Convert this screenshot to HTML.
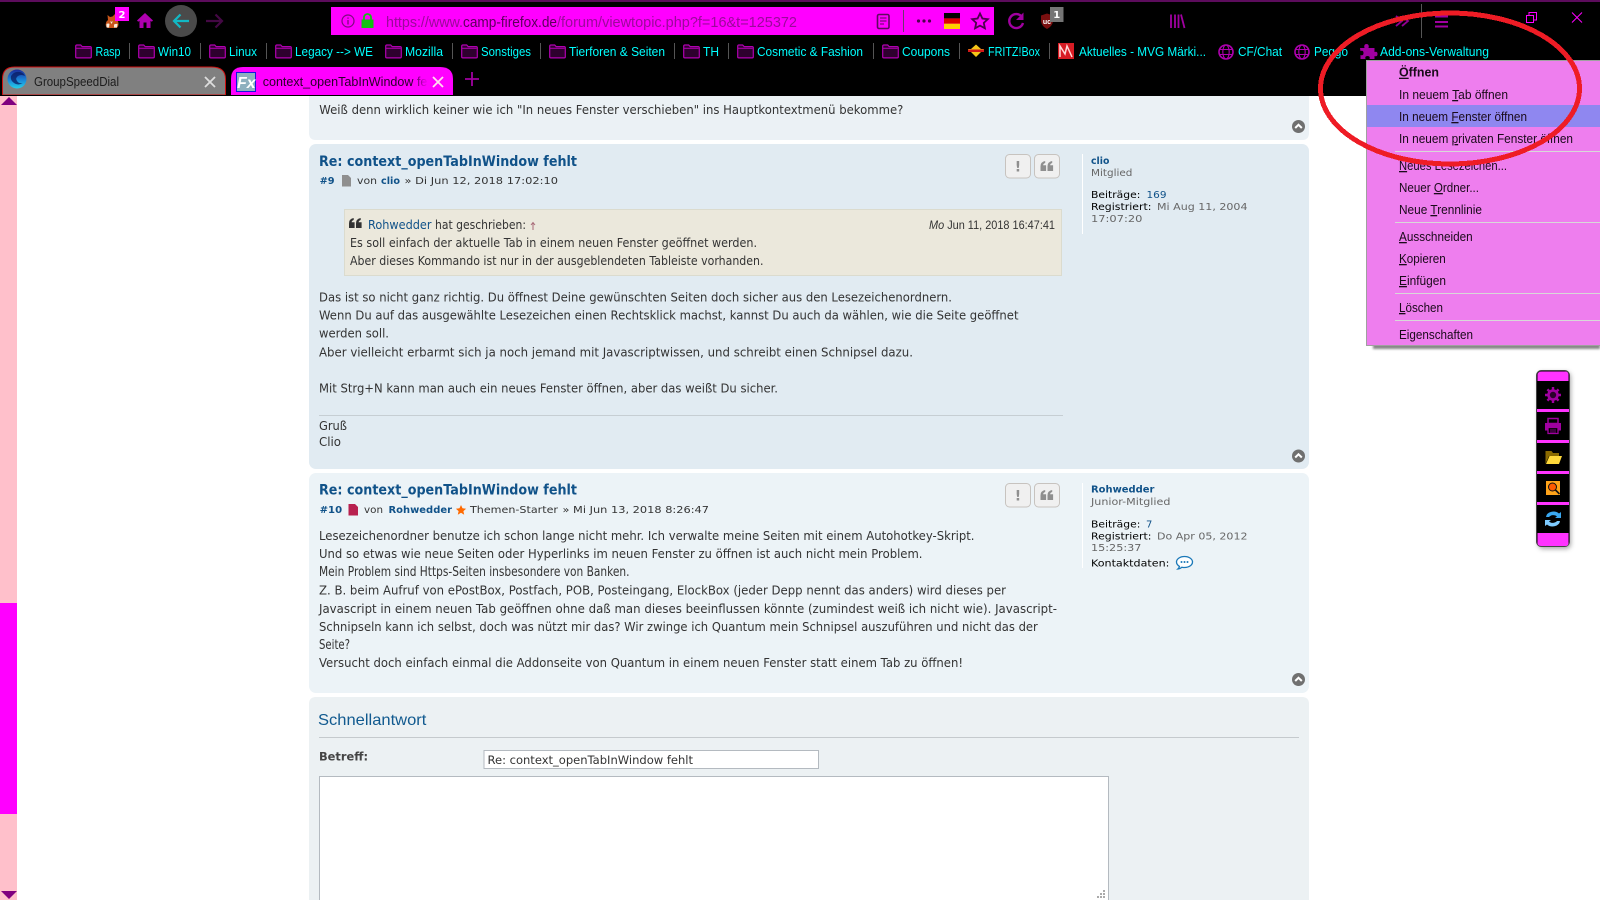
<!DOCTYPE html>
<html lang="de"><head><meta charset="utf-8"><title>context_openTabInWindow fehlt</title>
<style>
html,body{margin:0;padding:0;background:#fff;width:1600px;height:900px;overflow:hidden}
svg{display:block}
text{white-space:pre}
.bm{font:13px "Liberation Sans",sans-serif;fill:#00ffff}
.mi{font:13px "Liberation Sans",sans-serif;fill:#1a0a1a}
.b{font:12px "DejaVu Sans",sans-serif;fill:#333}
.m{font:10px "DejaVu Sans",sans-serif;fill:#333}
.mb{font:bold 10px "DejaVu Sans",sans-serif;fill:#105289}
.t{font:bold 14.5px "DejaVu Sans",sans-serif;fill:#105289}
.g{fill:#666}
.u{text-decoration:underline}
</style></head><body>
<svg xmlns="http://www.w3.org/2000/svg" width="1600" height="900" viewBox="0 0 1600 900">
<defs>
<g id="fo"><path d="M.7 2.2q0-1.2 1.2-1.2h3.8l1.500 1.600h7.900q1.200 0 1.200 1.200v9.100q0 1-1.200 1H1.900q-1.200 0-1.200-1z" fill="#2e002e" stroke="#b000b0" stroke-width="1.200"/><path d="M1 4.300h14.600" stroke="#b000b0" stroke-width="1"/></g>
<g id="gl"><circle cx="8" cy="8" r="7" fill="none" stroke="#b000b0" stroke-width="1.600"/><ellipse cx="8" cy="8" rx="3.200" ry="7" fill="none" stroke="#b000b0" stroke-width="1.100"/><path d="M1 5.500h14M1 10.500h14" stroke="#b000b0" stroke-width="1.100"/></g>
<g id="ub"><circle cx="6.500" cy="6.500" r="6.500" fill="#707070"/><path d="M3.200 8 6.500 4.800 9.800 8" fill="none" stroke="#fff" stroke-width="2"/></g>
<g id="bt"><rect x=".5" y=".5" width="25" height="23.500" rx="4" fill="#f0f0f0" stroke="#c7c3bf"/></g>
<g id="q"><path d="M0 5.500Q0 .8 4.700 0v2Q2.800 2.500 2.600 4.300H5.600V10H0zM7 5.500Q7 .8 11.700 0v2Q9.800 2.500 9.600 4.300h3V10H7z"/></g>
<linearGradient id="fade" x1="0" x2="1" y1="0" y2="0"><stop offset="0" stop-color="#f0f" stop-opacity="0"/><stop offset="1" stop-color="#f0f"/></linearGradient>
<linearGradient id="gsd" x1="0" x2="0" y1="0" y2="1"><stop offset="0" stop-color="#1c2a9a"/><stop offset=".55" stop-color="#1a86d8"/><stop offset="1" stop-color="#25d0e8"/></linearGradient>
<filter id="sh" x="-30%" y="-10%" width="160%" height="120%"><feGaussianBlur stdDeviation="2.500"/></filter>
<filter id="sh2" x="-5%" y="-5%" width="110%" height="110%"><feGaussianBlur stdDeviation="1"/></filter>
</defs>

<!-- chrome -->
<rect width="1600" height="96" fill="#000"/>
<rect width="1600" height="2" fill="#5c0c5c"/>

<!-- nav -->
<g>
<path d="M107.500 15l2.500 2 2.500-.5 2.500-2.500 1 5q2.500 2 2.500 5 0 3-2 4h-9q-2.500-2-1.500-5 .5-2 2-3z" fill="#c8551a"/>
<path d="M106.500 24q2-1 3 0l-.5 3.500h-2.500zM114 24.500q2-1 3.500-.5l-.5 3.500h-3zM110 21q1.500 1.500 3 0l-1.500 3z" fill="#f7ecdc"/>
<rect x="115" y="7" width="14" height="14" fill="#f0f"/><text x="122" y="18" text-anchor="middle" font-family="DejaVu Sans" font-weight="bold" font-size="10" fill="#fff">2</text>
<path d="M145 13 137 20.500l1.200 1.300 1.300-1.100V28h11v-7.300l1.300 1.100 1.200-1.300z" fill="#b000b0"/><rect x="143.500" y="22.500" width="3" height="5.500" fill="#000"/>
<circle cx="181" cy="21" r="16" fill="#4a4a4a"/>
<path d="M189 21H174M180.500 14.500 174 21l6.500 6.500" fill="none" stroke="#12b8c4" stroke-width="2.200"/>
<path d="M206 21h15M215.500 14.500 222 21l-6.500 6.500" fill="none" stroke="#440844" stroke-width="2.200"/>
</g>

<!-- URL bar -->
<rect x="331" y="7" width="663" height="28" fill="#f0f"/>
<circle cx="348" cy="21" r="6" fill="none" stroke="#7d0a7d" stroke-width="1.200"/><path d="M348 20v4.500M348 17.500v1.200" stroke="#7d0a7d" stroke-width="1.300"/>
<path d="M364 20v-2.500a3.500 3.500 0 0 1 7 0V20" fill="none" stroke="#13c013" stroke-width="1.800"/><rect x="361.500" y="19.500" width="12" height="8.500" fill="#13c013"/>
<text x="386" y="27" font-family="Liberation Sans" font-size="15" fill="#9a0a9a" textLength="77" lengthAdjust="spacingAndGlyphs">https://www.</text>
<text x="463" y="27" font-family="Liberation Sans" font-size="15" fill="#5a005a" textLength="94" lengthAdjust="spacingAndGlyphs">camp-firefox.de</text>
<text x="557" y="27" font-family="Liberation Sans" font-size="15" fill="#9a0a9a" textLength="240" lengthAdjust="spacingAndGlyphs">/forum/viewtopic.php?f=16&amp;t=125372</text>
<rect x="877.500" y="14.500" width="11.500" height="14" rx="1.500" fill="none" stroke="#5e0a5e" stroke-width="1.600"/><path d="M880 18h6.500M880 21h6.500M880 24h4" stroke="#5e0a5e" stroke-width="1"/>
<rect x="903" y="10" width="1" height="22" fill="#6a3a6a"/>
<circle cx="918.500" cy="21" r="1.600" fill="#4e004e"/><circle cx="924" cy="21" r="1.600" fill="#4e004e"/><circle cx="929.500" cy="21" r="1.600" fill="#4e004e"/>
<rect x="944" y="13" width="16" height="5.400" fill="#000"/><rect x="944" y="18.400" width="16" height="5.300" fill="#d00"/><rect x="944" y="23.700" width="16" height="5.300" fill="#ffce00"/>
<path d="M980 13.500l2.400 5 5.400.700-4 3.700 1.100 5.400-4.900-2.700-4.900 2.700 1.100-5.400-4-3.700 5.400-.700z" fill="none" stroke="#4e004e" stroke-width="1.800"/>

<!-- toolbar right -->
<path d="M1022 17a7 7 0 1 0 1 6" fill="none" stroke="#a000a0" stroke-width="2.400"/><path d="M1023.500 12.500v7.500h-7.500z" fill="#a000a0"/>
<path d="M1041 15.500l6-2 6 2v6q-1 5-6 7.500-5-2.500-6-7.500z" fill="#7a1010"/>
<text x="1047" y="24" text-anchor="middle" font-family="Liberation Sans" font-weight="bold" font-size="7" fill="#fff">uc</text>
<rect x="1050" y="7" width="13.500" height="15" fill="#757575"/><text x="1056.700" y="18" text-anchor="middle" font-family="DejaVu Sans" font-weight="bold" font-size="10" fill="#fff">1</text>
<path d="M1171 14.500v13.500M1175 14.500v13.500M1178.500 14.500v13.500M1181 14.500l3.500 13.500" stroke="#a000a0" stroke-width="1.800" fill="none"/>
<path d="M1396 16l6 5-6 5M1402 16l6 5-6 5" fill="none" stroke="#900090" stroke-width="1.800"/>
<rect x="1421" y="4" width="1" height="34" fill="#555"/>
<path d="M1435 16.500h13M1435 22h13M1435 26.500h13" stroke="#a000a0" stroke-width="2"/>
<rect x="1526.500" y="15.500" width="7" height="7" fill="none" stroke="#f0f" stroke-width="1"/><path d="M1529 15v-2.500h7.500V20H1534" fill="none" stroke="#f0f" stroke-width="1"/>
<path d="M1572 12.500l10 10M1582 12.500l-10 10" stroke="#f0f" stroke-width="1"/>

<!-- bookmarks -->
<use href="#fo" x="75" y="44"/><text class="bm" x="95.500" y="56" textLength="25" lengthAdjust="spacingAndGlyphs">Rasp</text><rect x="129" y="43" width="1" height="16" fill="#555"/>
<use href="#fo" x="138" y="44"/><text class="bm" x="158" y="56" textLength="33" lengthAdjust="spacingAndGlyphs">Win10</text><rect x="200" y="43" width="1" height="16" fill="#555"/>
<use href="#fo" x="209" y="44"/><text class="bm" x="229" y="56" textLength="28" lengthAdjust="spacingAndGlyphs">Linux</text><rect x="266" y="43" width="1" height="16" fill="#555"/>
<use href="#fo" x="275" y="44"/><text class="bm" x="295" y="56" textLength="78" lengthAdjust="spacingAndGlyphs">Legacy --&gt; WE</text>
<use href="#fo" x="385" y="44"/><text class="bm" x="405" y="56" textLength="38" lengthAdjust="spacingAndGlyphs">Mozilla</text><rect x="452" y="43" width="1" height="16" fill="#555"/>
<use href="#fo" x="461" y="44"/><text class="bm" x="481" y="56" textLength="50" lengthAdjust="spacingAndGlyphs">Sonstiges</text><rect x="540" y="43" width="1" height="16" fill="#555"/>
<use href="#fo" x="549" y="44"/><text class="bm" x="569" y="56" textLength="96" lengthAdjust="spacingAndGlyphs">Tierforen &amp; Seiten</text><rect x="674" y="43" width="1" height="16" fill="#555"/>
<use href="#fo" x="683" y="44"/><text class="bm" x="703" y="56" textLength="16" lengthAdjust="spacingAndGlyphs">TH</text><rect x="728" y="43" width="1" height="16" fill="#555"/>
<use href="#fo" x="737" y="44"/><text class="bm" x="757" y="56" textLength="106" lengthAdjust="spacingAndGlyphs">Cosmetic &amp; Fashion</text><rect x="873" y="43" width="1" height="16" fill="#555"/>
<use href="#fo" x="882" y="44"/><text class="bm" x="902" y="56" textLength="48" lengthAdjust="spacingAndGlyphs">Coupons</text><rect x="959" y="43" width="1" height="16" fill="#555"/>
<path d="M976 44.500l5 4.500h3l-3 3-5 5-5-5-3-3h3z" fill="#f5c518"/><path d="M968 49.500h16v2.500h-16z" fill="#d01818"/>
<text class="bm" x="988" y="56" textLength="52" lengthAdjust="spacingAndGlyphs">FRITZ!Box</text><rect x="1049" y="43" width="1" height="16" fill="#555"/>
<rect x="1058" y="43" width="16" height="16" fill="#d81c24"/><path d="M1060 57V46l5 8 2-8 5 11" fill="none" stroke="#ffd8d8" stroke-width="1.500"/>
<text class="bm" x="1079" y="56" textLength="127" lengthAdjust="spacingAndGlyphs">Aktuelles - MVG Märki...</text>
<use href="#gl" x="1218" y="44"/><text class="bm" x="1238" y="56" textLength="44" lengthAdjust="spacingAndGlyphs">CF/Chat</text>
<use href="#gl" x="1294" y="44"/><text class="bm" x="1314" y="56" textLength="34" lengthAdjust="spacingAndGlyphs">Peggo</text>
<path d="M1360 48h4.500q-1-4 2-4t2 4h6v4q3-1 3 2t-3 2v3h-5q1-3-2-3t-2 3h-5v-4q3 1 3-2t-3-2z" fill="#a000a0"/>
<text class="bm" x="1380" y="56" textLength="109" lengthAdjust="spacingAndGlyphs">Add-ons-Verwaltung</text>

<!-- tabs -->
<path d="M2.500 95V79q0-12 12-12h197q14 0 14 12v16z" fill="#808080" stroke="#d01010" stroke-width="1"/>
<circle cx="17" cy="79" r="9.500" fill="url(#gsd)"/><path d="M11 76q3-5 9-4 4 1 5 4-4-2-7 0-3 2-1 5 2 3 6 2-5 3-9 0-4-3-3-7z" fill="#0a1a60" opacity=".75"/>
<text x="34" y="86" font-family="Liberation Sans" font-size="13" fill="#1c1c1c" textLength="85" lengthAdjust="spacingAndGlyphs">GroupSpeedDial</text>
<path d="M205 77l10 10M215 77l-10 10" stroke="#ddd" stroke-width="1.800"/>
<path d="M231 95V79q0-12 12-12h197q13 0 13 12v16z" fill="#f0f"/>
<rect x="236.500" y="72.500" width="19" height="19" fill="#8db0be" stroke="#1414e0" stroke-width="1"/>
<text x="237" y="88" font-family="Liberation Sans" font-style="italic" font-weight="bold" font-size="16" fill="#fff">Fx</text>
<text x="262.700" y="86" font-family="Liberation Sans" font-size="13" fill="#2a002a" textLength="178" lengthAdjust="spacingAndGlyphs">context_openTabInWindow fehlt</text>
<rect x="412" y="70" width="16" height="24" fill="url(#fade)"/><rect x="428" y="70" width="18" height="24" fill="#f0f"/>
<path d="M433 77l10 10M443 77l-10 10" stroke="#fde" stroke-width="1.800"/>
<path d="M465 79h14M472 72v14" stroke="#a000a0" stroke-width="1.800"/>
<rect x="0" y="95" width="1600" height="1" fill="#000"/>

<!-- scrollbar -->
<rect x="0" y="96" width="17" height="804" fill="#ffc0cb"/>
<rect x="0" y="603" width="17" height="211" fill="#f0f"/>
<path d="M9 97l8 8H1z" fill="#800080"/><path d="M1 891h16l-8 8z" fill="#800080"/>

<!-- post 8 remainder -->
<path d="M309 96h1000v37q0 7-7 7H316q-7 0-7-7z" fill="#ebf1f5"/>
<text class="b" x="319.300" y="114" textLength="584" lengthAdjust="spacingAndGlyphs">Weiß denn wirklich keiner wie ich "In neues Fenster verschieben" ins Hauptkontextmenü bekomme?</text>
<use href="#ub" x="1292" y="120"/>

<!-- post 9 -->
<rect x="309" y="144" width="1000" height="325" rx="7" fill="#e1ebf2"/>
<text class="t" x="319" y="166" textLength="258" lengthAdjust="spacingAndGlyphs">Re: context_openTabInWindow fehlt</text>
<text class="mb" x="319.600" y="184" textLength="15" lengthAdjust="spacingAndGlyphs">#9</text>
<path d="M342 175h6l3 3v8.500h-9z" fill="#8f8f8f"/>
<text class="m" x="357" y="184" textLength="20" lengthAdjust="spacingAndGlyphs">von</text>
<text class="mb" x="381" y="184" textLength="19" lengthAdjust="spacingAndGlyphs">clio</text>
<text class="m" x="404.500" y="184" textLength="153.500" lengthAdjust="spacingAndGlyphs">» Di Jun 12, 2018 17:02:10</text>
<use href="#bt" x="1005" y="154"/><use href="#bt" x="1034" y="154"/>
<text x="1018" y="171.500" text-anchor="middle" font-family="DejaVu Sans" font-weight="bold" font-size="14" fill="#8f8f8f">!</text>
<use href="#q" x="1040.500" y="161" fill="#8f8f8f"/>
<rect x="344.500" y="209.500" width="717" height="66" fill="#ebe8dc" stroke="#dbdbce"/>
<use href="#q" x="349" y="218" fill="#333"/>
<text class="b" x="368" y="229" textLength="63.500" lengthAdjust="spacingAndGlyphs" style="fill:#105289">Rohwedder</text>
<text class="b" x="435" y="229" textLength="91" lengthAdjust="spacingAndGlyphs">hat geschrieben:</text>
<path d="M533 230v-7M531 225l2-2.500 2 2.500" stroke="#a86a78" fill="none"/>
<text x="929" y="229" font-family="Liberation Sans" font-size="11.500" fill="#333" textLength="126" lengthAdjust="spacingAndGlyphs"><tspan font-style="italic">Mo</tspan> Jun 11, 2018 16:47:41</text>
<text class="b" x="350" y="247" textLength="407" lengthAdjust="spacingAndGlyphs">Es soll einfach der aktuelle Tab in einem neuen Fenster geöffnet werden.</text>
<text class="b" x="350" y="265" textLength="413.500" lengthAdjust="spacingAndGlyphs">Aber dieses Kommando ist nur in der ausgeblendeten Tableiste vorhanden.</text>
<text class="b" x="319" y="301.500" textLength="633" lengthAdjust="spacingAndGlyphs">Das ist so nicht ganz richtig. Du öffnest Deine gewünschten Seiten doch sicher aus den Lesezeichenordnern.</text>
<text class="b" x="319" y="319.500" textLength="699.500" lengthAdjust="spacingAndGlyphs">Wenn Du auf das ausgewählte Lesezeichen einen Rechtsklick machst, kannst Du auch da wählen, wie die Seite geöffnet</text>
<text class="b" x="319" y="337.500" textLength="70" lengthAdjust="spacingAndGlyphs">werden soll.</text>
<text class="b" x="319" y="356.500" textLength="594" lengthAdjust="spacingAndGlyphs">Aber vielleicht erbarmt sich ja noch jemand mit Javascriptwissen, und schreibt einen Schnipsel dazu.</text>
<text class="b" x="319" y="392.500" textLength="459" lengthAdjust="spacingAndGlyphs">Mit Strg+N kann man auch ein neues Fenster öffnen, aber das weißt Du sicher.</text>
<rect x="319" y="415" width="744" height="1" fill="#c6ced3"/>
<text class="b" x="319" y="430" textLength="28" lengthAdjust="spacingAndGlyphs">Gruß</text>
<text class="b" x="319" y="446" textLength="22" lengthAdjust="spacingAndGlyphs">Clio</text>
<use href="#ub" x="1292" y="449.500"/>
<rect x="1082" y="154" width="1" height="80" fill="#fff"/>
<text class="mb" x="1091" y="164" textLength="18.400" lengthAdjust="spacingAndGlyphs">clio</text>
<text class="m g" x="1091" y="176" textLength="41.400" lengthAdjust="spacingAndGlyphs">Mitglied</text>
<text class="m" style="fill:#000" x="1091" y="198" textLength="49.400" lengthAdjust="spacingAndGlyphs">Beiträge:</text>
<text class="m" style="fill:#105289" x="1146.500" y="198" textLength="20" lengthAdjust="spacingAndGlyphs">169</text>
<text class="m" style="fill:#000" x="1091" y="210" textLength="60.400" lengthAdjust="spacingAndGlyphs">Registriert:</text>
<text class="m g" x="1157" y="210" textLength="90.500" lengthAdjust="spacingAndGlyphs">Mi Aug 11, 2004</text>
<text class="m g" x="1091" y="222" textLength="51.400" lengthAdjust="spacingAndGlyphs">17:07:20</text>

<!-- post 10 -->
<rect x="309" y="473" width="1000" height="220" rx="7" fill="#ecf3f7"/>
<text class="t" x="319" y="494.500" textLength="258" lengthAdjust="spacingAndGlyphs">Re: context_openTabInWindow fehlt</text>
<text class="mb" x="319.600" y="513" textLength="22.500" lengthAdjust="spacingAndGlyphs">#10</text>
<path d="M348.500 504h6.500l3 3v8.500h-9.500z" fill="#b8214f"/>
<text class="m" x="364" y="513" textLength="19" lengthAdjust="spacingAndGlyphs">von</text>
<text class="mb" x="388.500" y="513" textLength="63.500" lengthAdjust="spacingAndGlyphs">Rohwedder</text>
<path d="M461 505l1.500 3.300 3.600.4-2.700 2.400.8 3.600-3.200-1.900-3.200 1.900.8-3.600-2.700-2.400 3.600-.4z" fill="#ff6a00"/>
<text class="m" x="470" y="513" textLength="88" lengthAdjust="spacingAndGlyphs">Themen-Starter</text>
<text class="m" x="562.500" y="513" textLength="146.500" lengthAdjust="spacingAndGlyphs">» Mi Jun 13, 2018 8:26:47</text>
<use href="#bt" x="1005" y="483"/><use href="#bt" x="1034" y="483"/>
<text x="1018" y="500.500" text-anchor="middle" font-family="DejaVu Sans" font-weight="bold" font-size="14" fill="#8f8f8f">!</text>
<use href="#q" x="1040.500" y="490" fill="#8f8f8f"/>
<text class="b" x="319" y="540" textLength="655.500" lengthAdjust="spacingAndGlyphs">Lesezeichenordner benutze ich schon lange nicht mehr. Ich verwalte meine Seiten mit einem Autohotkey-Skript.</text>
<text class="b" x="319" y="558" textLength="603.500" lengthAdjust="spacingAndGlyphs">Und so etwas wie neue Seiten oder Hyperlinks im neuen Fenster zu öffnen ist auch nicht mein Problem.</text>
<text class="b" style="font-size:13px" x="319" y="576" textLength="310.500" lengthAdjust="spacingAndGlyphs">Mein Problem sind Https-Seiten insbesondere von Banken.</text>
<text class="b" x="319" y="594.500" textLength="687" lengthAdjust="spacingAndGlyphs">Z. B. beim Aufruf von ePostBox, Postfach, POB, Posteingang, ElockBox (jeder Depp nennt das anders) wird dieses per</text>
<text class="b" x="319" y="613" textLength="738" lengthAdjust="spacingAndGlyphs">Javascript in einem neuen Tab geöffnen ohne daß man dieses beeinflussen könnte (zumindest weiß ich nicht wie). Javascript-</text>
<text class="b" x="319" y="631" textLength="718.800" lengthAdjust="spacingAndGlyphs">Schnipseln kann ich selbst, doch was nützt mir das? Wir zwinge ich Quantum mein Schnipsel auszuführen und nicht das der</text>
<text class="b" style="font-size:13px" x="319" y="649" textLength="31" lengthAdjust="spacingAndGlyphs">Seite?</text>
<text class="b" x="319" y="667" textLength="644" lengthAdjust="spacingAndGlyphs">Versucht doch einfach einmal die Addonseite von Quantum in einem neuen Fenster statt einem Tab zu öffnen!</text>
<use href="#ub" x="1292" y="673"/>
<rect x="1082" y="483" width="1" height="85" fill="#fff"/>
<text class="mb" x="1091" y="492.700" textLength="63.400" lengthAdjust="spacingAndGlyphs">Rohwedder</text>
<text class="m g" x="1091" y="505" textLength="79.400" lengthAdjust="spacingAndGlyphs">Junior-Mitglied</text>
<text class="m" style="fill:#000" x="1091" y="527.400" textLength="49.400" lengthAdjust="spacingAndGlyphs">Beiträge:</text>
<text class="m" style="fill:#105289" x="1146" y="527.400">7</text>
<text class="m" style="fill:#000" x="1091" y="539.400" textLength="60.400" lengthAdjust="spacingAndGlyphs">Registriert:</text>
<text class="m g" x="1157" y="539.400" textLength="90.500" lengthAdjust="spacingAndGlyphs">Do Apr 05, 2012</text>
<text class="m g" x="1091" y="551" textLength="50.400" lengthAdjust="spacingAndGlyphs">15:25:37</text>
<text class="m" style="fill:#000" x="1091" y="566.700" textLength="78.400" lengthAdjust="spacingAndGlyphs">Kontaktdaten:</text>
<g transform="translate(0 -1)">
<path d="M1184.500 557.500c-4.500 0-8 2.500-8 5.500 0 1.800 1.300 3.400 3 4.400-.2 1-.8 1.900-1.600 2.600 1.600-.1 3-.8 4-1.800.8.200 1.700.3 2.600.3 4.500 0 8-2.500 8-5.500s-3.500-5.500-8-5.500z" fill="#fff" stroke="#1a78b8" stroke-width="1.300"/>
<circle cx="1181.500" cy="563" r="1" fill="#1a78b8"/><circle cx="1184.500" cy="563" r="1" fill="#1a78b8"/><circle cx="1187.500" cy="563" r="1" fill="#1a78b8"/>
</g>

<!-- quick reply -->
<path d="M316 697h986q7 0 7 7v196H309V704q0-7 7-7z" fill="#ecf1f3"/>
<text x="318" y="725" font-family="Liberation Sans" font-size="16" fill="#115a8f" textLength="108.400" lengthAdjust="spacingAndGlyphs">Schnellantwort</text>
<rect x="319" y="737" width="980" height="1" fill="#c5cacd"/>
<text x="319" y="760.700" font-family="DejaVu Sans" font-weight="bold" font-size="11.500" fill="#444" textLength="49" lengthAdjust="spacingAndGlyphs">Betreff:</text>
<rect x="484" y="750.500" width="334.500" height="18" fill="#fff" stroke="#b4bac0"/>
<text x="487.500" y="764" font-family="DejaVu Sans" font-size="11.500" fill="#333" textLength="205.500" lengthAdjust="spacingAndGlyphs">Re: context_openTabInWindow fehlt</text>
<path d="M319.500 900V776.500h789V900" fill="#fff" stroke="#b4bac0"/>
<path d="M1103 890h2v2h-2zM1100 893h2v2h-2zM1103 893h2v2h-2zM1097 896h2v2h-2zM1100 896h2v2h-2zM1103 896h2v2h-2z" fill="#aaa"/>

<!-- context menu -->
<rect x="1373" y="66" width="227" height="283" fill="#555" opacity=".7" filter="url(#sh2)"/>
<rect x="1366.500" y="60.500" width="234" height="285" fill="#ee7eee" stroke="#a0a0a0"/>
<rect x="1367" y="105" width="233" height="22" fill="#8f87f0"/>
<text x="1399" y="76.700" font-family="Liberation Sans" font-weight="bold" font-size="13" fill="#1a0a1a" textLength="40" lengthAdjust="spacingAndGlyphs"><tspan class="u">Ö</tspan>ffnen</text>
<text class="mi" x="1399" y="99" textLength="109" lengthAdjust="spacingAndGlyphs">In neuem <tspan class="u">T</tspan>ab öffnen</text>
<text class="mi" x="1399" y="121" textLength="128" lengthAdjust="spacingAndGlyphs">In neuem <tspan class="u">F</tspan>enster öffnen</text>
<text class="mi" x="1399" y="143" textLength="174" lengthAdjust="spacingAndGlyphs">In neuem <tspan class="u">p</tspan>rivaten Fenster öffnen</text>
<rect x="1395" y="151" width="205" height="1" fill="#d8d8d8"/>
<text class="mi" x="1399" y="170" textLength="108" lengthAdjust="spacingAndGlyphs"><tspan class="u">N</tspan>eues Lesezeichen...</text>
<text class="mi" x="1399" y="192" textLength="80" lengthAdjust="spacingAndGlyphs">Neuer <tspan class="u">O</tspan>rdner...</text>
<text class="mi" x="1399" y="214" textLength="83" lengthAdjust="spacingAndGlyphs">Neue <tspan class="u">T</tspan>rennlinie</text>
<rect x="1395" y="222" width="205" height="1" fill="#d8d8d8"/>
<text class="mi" x="1399" y="241" textLength="73.700" lengthAdjust="spacingAndGlyphs"><tspan class="u">A</tspan>usschneiden</text>
<text class="mi" x="1399" y="263" textLength="46.700" lengthAdjust="spacingAndGlyphs"><tspan class="u">K</tspan>opieren</text>
<text class="mi" x="1399" y="285" textLength="47" lengthAdjust="spacingAndGlyphs"><tspan class="u">E</tspan>infügen</text>
<rect x="1395" y="293" width="205" height="1" fill="#d8d8d8"/>
<text class="mi" x="1399" y="312" textLength="44" lengthAdjust="spacingAndGlyphs"><tspan class="u">L</tspan>öschen</text>
<rect x="1395" y="320" width="205" height="1" fill="#d8d8d8"/>
<text class="mi" x="1399" y="339" textLength="74" lengthAdjust="spacingAndGlyphs">Ei<tspan class="u">g</tspan>enschaften</text>

<!-- red ellipse -->
<ellipse cx="1450" cy="88.500" rx="129.500" ry="75.500" fill="none" stroke="#ee1c25" stroke-width="5" shape-rendering="crispEdges"/>

<!-- side toolbar -->
<rect x="1538" y="372" width="33" height="177" rx="5" fill="#555" opacity=".5" filter="url(#sh)"/>
<rect x="1536.500" y="370.500" width="33" height="176" rx="5" fill="#000" stroke="#444"/>
<path d="M1537.500 381v-5.500q0-4 4-4h24q3 0 3 4v5.500z" fill="#ff33ff"/>
<rect x="1537" y="409" width="32" height="3" fill="#ff33ff"/><rect x="1537" y="440" width="32" height="3" fill="#ff33ff"/><rect x="1537" y="471" width="32" height="3" fill="#ff33ff"/><rect x="1537" y="502" width="32" height="3" fill="#ff33ff"/>
<path d="M1537.500 533v9.500q0 3.500 3.500 3.500h25q2.500 0 2.500-3.500V533z" fill="#ff33ff"/>
<g stroke="#a000a0" fill="#2a002a"><circle cx="1553" cy="395" r="4.500" stroke-width="2.600"/><path d="M1553 387v3M1553 400v3M1545 395h3M1558 395h3M1547.400 389.400l2 2M1556.600 398.600l2 2M1558.600 389.400l-2 2M1549.400 398.600l-2 2" stroke-width="2.400"/></g>
<path d="M1548 418.500h10v5h-10z" fill="none" stroke="#a000a0" stroke-width="1.500"/><path d="M1545 423h16v7.500h-16z" fill="#a000a0"/><path d="M1548 427.500h10v6h-10z" fill="#000" stroke="#a000a0" stroke-width="1.300"/><path d="M1550 430h6M1550 432h6" stroke="#a000a0" stroke-width=".8"/>
<path d="M1545.500 464v-13h6l1.500 2h6v3h-10l-3.500 8z" fill="#8a6a00"/><path d="M1546 464l3.500-8h12.500l-3 8z" fill="#ffd93a"/>
<rect x="1546" y="481" width="14" height="14" fill="#ffa31a"/><circle cx="1552.500" cy="487" r="4" fill="#ff5a00" stroke="#111"/><path d="M1555.500 490l4 4" stroke="#111" stroke-width="1.600"/>
<path d="M1546 517a7.500 6 0 0 1 13-3.500l2-1.500v6h-6l2-1.500a5 4 0 0 0-8 .500z" fill="#3aa8f0"/><path d="M1560 521a7.500 6 0 0 1-13 3.500l-2 1.500v-6h6l-2 1.500a5 4 0 0 0 8-.500z" fill="#7dcbff"/>
</svg>
</body></html>
